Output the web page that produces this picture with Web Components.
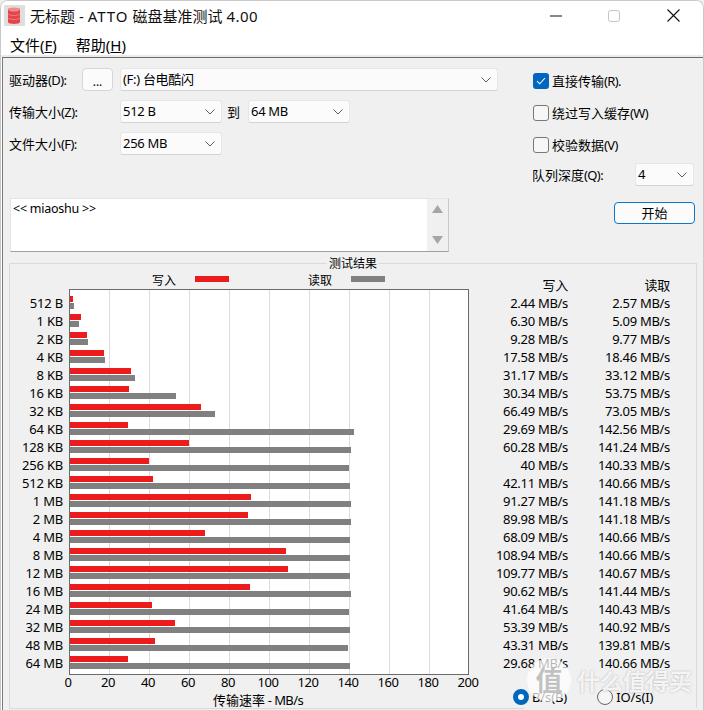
<!DOCTYPE html>
<html lang="zh-CN">
<head>
<meta charset="utf-8">
<title>ATTO</title>
<style>
html,body{margin:0;padding:0;background:#f0f0f0;}
body{font:13px/16px "Noto Sans","Noto Sans CJK SC",sans-serif;color:#000;width:704px;height:710px;overflow:hidden;}
</style>
</head>
<body>
<atto-window>
  <atto-titlebar></atto-titlebar>
  <atto-menubar></atto-menubar>
  <atto-panel>
    <atto-form></atto-form>
    <atto-results></atto-results>
  </atto-panel>
  <atto-watermark></atto-watermark>
</atto-window>
<script>
const FONT='"Noto Sans","Noto Sans CJK SC",sans-serif';
function def(name,html,init){
  customElements.define(name,class extends HTMLElement{
    constructor(){super();this.attachShadow({mode:'open'}).innerHTML=typeof html==='function'?html(this):html;}
    connectedCallback(){if(init)init(this);}
  });
}
const chevron='<svg width="10" height="6" viewBox="0 0 10 6"><path d="M.5.5 5 5 9.5.5" fill="none" stroke="#5a5a5a" stroke-width="1"/></svg>';

def('atto-window',`<style>
:host{display:block;position:relative;box-sizing:border-box;width:704px;height:710px;overflow:hidden;background:#fff;
border:1px solid #c9c9c9;border-bottom:0;border-radius:8px 8px 0 0;font:13px/16px ${FONT};}
</style><slot></slot>`);

def('atto-titlebar',`<style>
:host{display:flex;align-items:center;box-sizing:border-box;height:27px;padding-top:2px;background:#fff;}
.ic{margin:0 0 0 3px;display:flex;}
.t{margin-left:5px;font-size:15px;line-height:20px;white-space:nowrap;color:#111;}
.sp{flex:1;}
.b{display:flex;align-items:center;justify-content:center;width:58px;height:25px;}
</style>
<span class="ic"><svg width="21" height="21" viewBox="0 0 21 21"><rect width="21" height="21" fill="#dedede"/>
<path d="M4 4.5C4 2.5 16 2.5 16 4.5V17C16 19.5 4 19.5 4 17Z" fill="#e4444a"/><ellipse cx="10" cy="4.5" rx="6" ry="2" fill="#f08a8c"/><path d="M4 9c2 2 10 2 12 0M4 13c2 2 10 2 12 0" fill="none" stroke="#f08a8c" stroke-width=".8"/></svg></span>
<span class="t">无标题 - <span style="letter-spacing:1px">ATTO</span> 磁盘基准测试 <span style="letter-spacing:.5px">4.00</span></span><span class="sp"></span>
<span class="b"><svg width="12" height="2"><rect width="12" height="1" y=".5" fill="#111"/></svg></span>
<span class="b"><svg width="12" height="12"><rect x=".5" y=".5" width="11" height="11" rx="2" fill="none" stroke="#c4c4c4"/></svg></span>
<span class="b" style="width:60px"><svg width="13" height="13"><path d="M.5.5l12 12M12.5.5l-12 12" stroke="#111" stroke-width="1.1"/></svg></span>`);

def('atto-menubar',`<style>
:host{display:flex;gap:19px;box-sizing:border-box;height:29px;padding:7px 0 0 9px;font-size:15px;line-height:20px;background:#fff;
border-bottom:2px solid #ebebeb;}
</style><span>文件(<u>F</u>)</span><span>帮助(<u>H</u>)</span>`);

def('atto-panel',`<style>
:host{display:block;box-sizing:border-box;margin-left:1px;height:653px;background:#f0f0f0;border-top:1px solid #6e6e6e;border-left:1px solid #7a7a7a;padding:10px 0 0 6px;}
</style><slot></slot>`);

def('atto-combo',el=>`<style>
:host{display:flex;align-items:center;box-sizing:border-box;height:23px;padding:0 6px 0 2px;background:#fbfbfb;border:1px solid #e6e6e6;border-bottom-color:#d2d2d2;border-radius:3px;width:${el.getAttribute('w')}px;}
.v{flex:1;white-space:nowrap;letter-spacing:-.3px;padding-bottom:2px;}
</style><span class="v"><slot></slot></span>${chevron}`);

def('atto-check',el=>{const on=el.hasAttribute('on');return `<style>
:host{display:flex;align-items:center;height:16px;white-space:nowrap;}
.b{box-sizing:border-box;width:16px;height:16px;margin-right:3px;border-radius:3px;display:flex;align-items:center;justify-content:center;
${on?'background:#0067c0;':'background:#f7f7f7;border:1px solid #787878;'}}
</style><span class="b">${on?'<svg width="10" height="8" viewBox="0 0 10 8"><path d="M1 4.2 3.7 6.8 9 1" fill="none" stroke="#fff" stroke-width="1.1"/></svg>':''}</span><slot></slot>`});

def('atto-form',`<style>
:host{display:grid;grid-template-columns:523px 163px;}
.p{letter-spacing:-.6px;}
.rows{display:flex;flex-direction:column;gap:9px;}
.row{display:flex;align-items:center;height:23px;}
.lab{flex:none;white-space:nowrap;}
.dots{box-sizing:border-box;width:31px;height:23px;margin-right:7px;background:#fbfbfb;border:1px solid #d6d6d6;border-radius:4px;display:flex;align-items:center;justify-content:center;font-size:12px;padding-top:5px;}
.to{width:26px;padding-left:5px;box-sizing:border-box;}
.memo{box-sizing:border-box;display:flex;width:439px;height:54px;margin:43px 0 0 1px;background:#fff;border:1px solid #e4e4e4;border-bottom-color:#a0a0a0;border-right-color:#c8c8c8;font-size:12.5px;}
.memo .txt{flex:1;padding:2px 2px;letter-spacing:-.25px;}
.sb{width:21px;background:#f0f0f0;display:flex;flex-direction:column;align-items:center;justify-content:space-between;padding:6px 0 7px;box-sizing:border-box;}
.side{display:flex;flex-direction:column;padding-top:5px;}
.side atto-check{margin:0 0 16px 1px;}
.q{display:flex;align-items:center;justify-content:space-between;width:162px;margin-top:-6px;}
.start{box-sizing:border-box;align-self:flex-start;width:81px;height:22px;margin:16px 0 0 82px;border:1.5px solid #0a76cc;border-radius:4px;background:#fbfbfb;display:flex;align-items:center;justify-content:center;}
</style>
<div>
  <div class="rows">
    <div class="row"><span class="lab" style="width:73px">驱动器<span class="p">(D):</span></span><span class="dots">...</span><atto-combo w="378">(F:) 台电酷闪</atto-combo></div>
    <div class="row"><span class="lab" style="width:111px">传输大小<span class="p">(Z):</span></span><atto-combo w="102">512 B</atto-combo><span class="to">到</span><atto-combo w="102">64 MB</atto-combo></div>
    <div class="row"><span class="lab" style="width:111px">文件大小<span class="p">(F):</span></span><atto-combo w="102">256 MB</atto-combo></div>
  </div>
  <div class="memo"><div class="txt">&lt;&lt; miaoshu &gt;&gt;</div><div class="sb">
    <svg width="11" height="8"><path d="M5.5 0 11 8H0Z" fill="#a6a6a6"/></svg>
    <svg width="11" height="8"><path d="M5.5 8 11 0H0Z" fill="#a6a6a6"/></svg></div></div>
</div>
<div class="side">
  <atto-check on>直接传输<span class="p">(R).</span></atto-check>
  <atto-check>绕过写入缓存<span class="p">(W)</span></atto-check>
  <atto-check>校验数据<span class="p">(V)</span></atto-check>
  <div class="q"><span>队列深度<span class="p">(Q):</span></span><atto-combo w="59">4</atto-combo></div>
  <div class="start">开始</div>
</div>`);

const DATA=[['512 B','2.44','2.57'],['1 KB','6.30','5.09'],['2 KB','9.28','9.77'],['4 KB','17.58','18.46'],['8 KB','31.17','33.12'],['16 KB','30.34','53.75'],['32 KB','66.49','73.05'],['64 KB','29.69','142.56'],['128 KB','60.28','141.24'],['256 KB','40','140.33'],['512 KB','42.11','140.66'],['1 MB','91.27','141.18'],['2 MB','89.98','141.18'],['4 MB','68.09','140.66'],['8 MB','108.94','140.66'],['12 MB','109.77','140.67'],['16 MB','90.62','141.44'],['24 MB','41.64','140.43'],['32 MB','53.39','140.92'],['48 MB','43.31','139.81'],['64 MB','29.68','140.66']];
const w=v=>Math.floor(v*2-1);

def('atto-results',`<style>
:host{display:block;position:relative;box-sizing:border-box;width:688px;height:446px;margin:11px 0 0 0;border:1px solid #dadada;background:#f0f0f0;}
.cap{position:absolute;left:317px;top:-7px;padding:0 2px;background:#f0f0f0;font-size:12px;line-height:14px;white-space:nowrap;}
.cut{position:absolute;left:514px;right:-1px;bottom:-1px;height:1px;background:#f0f0f0;}
.wrap{display:grid;grid-template-columns:459px 1fr;}
.legend{display:flex;align-items:center;height:17px;padding-top:8px;}
.legend span{width:24px;white-space:nowrap;font-size:12px;}
.legend i{display:block;width:34px;height:6px;margin-top:-4px;}
.chart{display:grid;grid-template-columns:53px 400px;column-gap:6px;}
.ylab{padding-top:5px;letter-spacing:-.2px;}
.ylab div{height:18px;line-height:18px;text-align:right;white-space:nowrap;}
.plot{box-sizing:border-box;width:400px;height:386px;border:1px solid #6a6a6a;padding-top:4px;background:#fff repeating-linear-gradient(90deg,transparent 0 39px,#dcdcdc 39px 40px,transparent 40px);}
.r{height:18px;box-sizing:border-box;padding-top:2px;}
.r b{display:block;height:6px;}
.r b+b{margin-top:1px;}
.red{background:#ed1c1c;}.gray{background:#808080;}
.ax{position:relative;height:17px;margin-left:59px;letter-spacing:-.5px;}
.ax span{position:absolute;top:-1px;width:30px;margin-left:-15px;text-align:center;line-height:16px;}
.axt{padding-left:203px;line-height:16px;white-space:nowrap;}
.axt span{letter-spacing:-.6px;}
.res{padding-top:12px;}
.res .l{display:grid;grid-template-columns:99px 102px;height:18px;line-height:18px;text-align:right;white-space:nowrap;letter-spacing:-.3px;}
.radios{display:flex;align-items:center;height:16px;margin:17px 0 0 44px;position:relative;letter-spacing:-.1px;}
.radios span{white-space:nowrap;}
.rd{box-sizing:border-box;width:16px;height:16px;border-radius:50%;margin-right:3px;flex:none;}
.on{border:5px solid #0067c0;background:#fff;}
.off{border:1px solid #666;background:#f5f5f5;margin-left:30px;margin-right:3px;}
</style>
<div class="cap">测试结果</div>
<div class="wrap">
  <div>
    <div class="legend"><span style="margin-left:142px">写入</span><i class="red" style="margin-left:19px"></i><span style="margin-left:79px">读取</span><i class="gray" style="margin-left:19px"></i></div>
    <div class="chart"><div class="ylab" id="y"></div><div class="plot" id="p"></div></div>
    <div class="ax" id="ax"></div>
    <div class="axt">传输速率<span> - MB/s</span></div>
  </div>
  <div class="res" id="res"></div>
</div>
<div class="cut"></div>`,el=>{
  const s=el.shadowRoot;
  s.getElementById('y').innerHTML=DATA.map(d=>`<div>${d[0]}</div>`).join('');
  s.getElementById('p').innerHTML=DATA.map(d=>`<div class="r"><b class="red" style="width:${w(d[1])}px"></b><b class="gray" style="width:${w(d[2])}px"></b></div>`).join('');
  let a='';for(let i=0;i<=10;i++)a+=`<span style="left:${i*40-1}px">${i*20}</span>`;
  s.getElementById('ax').innerHTML=a;
  s.getElementById('res').innerHTML='<div class="l"><span>写入</span><span>读取</span></div>'+DATA.map(d=>`<div class="l"><span>${d[1]} MB/s</span><span>${d[2]} MB/s</span></div>`).join('')+
  '<div class="radios"><i class="rd on"></i><span>B/s(B)</span><i class="rd off"></i><span>IO/s(I)</span></div>';
});

def('atto-watermark',`<style>
:host{position:absolute;left:526px;top:655px;display:flex;align-items:center;height:48px;pointer-events:none;}
.c{width:44px;height:44px;border-radius:50%;background:rgba(255,255,255,.72);display:flex;align-items:center;justify-content:center;font:700 27px/44px "Noto Sans CJK SC",sans-serif;color:rgba(178,178,178,.8);}
.t{margin-left:6px;font:700 23px/30px "Noto Sans CJK SC",sans-serif;color:rgba(255,255,255,.85);text-shadow:0 0 2px rgba(120,120,120,.55);white-space:nowrap;}
</style><span class="c">值</span><span class="t">什么值得买</span>`);
</script>
</body>
</html>
